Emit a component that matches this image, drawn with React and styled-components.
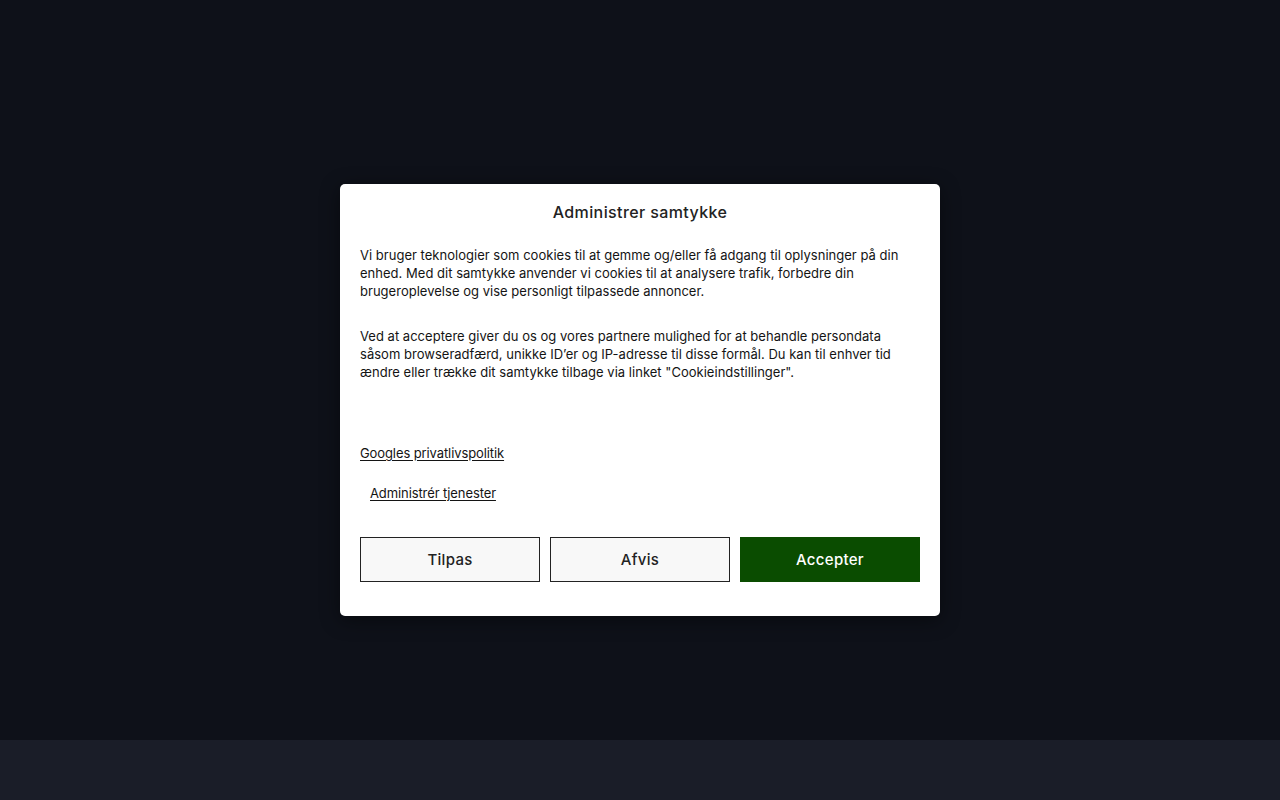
import React from "react";
import styled, { createGlobalStyle } from "styled-components";

const Global = createGlobalStyle`
  html, body { margin: 0; padding: 0; }
  body { background: #0e1119; font-family: "Inter", "Noto Sans", sans-serif; }
  * { box-sizing: border-box; }
`;

const Page = styled.div`
  width: 1280px;
  height: 800px;
  display: flex;
  flex-direction: column;
`;

const Overlay = styled.div`
  height: 740px;
  background: #0e1119;
  display: flex;
  justify-content: center;
  padding-top: 184px;
`;

const Footer = styled.div`
  height: 60px;
  background: #1a1d28;
`;

const Modal = styled.div`
  width: 600px;
  height: 432px;
  background: #ffffff;
  border-radius: 5px;
  box-shadow: 0 4px 20px rgba(0, 0, 0, 0.45);
  padding: 17px 20px 20px;
  display: flex;
  flex-direction: column;
  color: #222222;
`;

const Title = styled.h2`
  margin: 0;
  text-align: center;
  font-size: 16px;
  font-weight: 500;
  line-height: 22px;
  letter-spacing: 0.4px;
  color: #222;
`;

const Text = styled.p`
  margin: ${(p) => p.$top}px 0 0;
  font-size: 13px;
  line-height: 18px;
  letter-spacing: 0.02px;
  color: #141414;
`;

const Link = styled.a`
  display: block;
  margin-top: ${(p) => p.$top}px;
  margin-left: ${(p) => p.$indent || 0}px;
  font-size: 13px;
  line-height: 18px;
  letter-spacing: -0.1px;
  color: #141414;
  text-decoration: underline;
  text-underline-offset: 2px;
`;

const Buttons = styled.div`
  margin-top: 35px;
  display: grid;
  grid-template-columns: repeat(3, 180px);
  gap: 10px;
`;

const Button = styled.button`
  height: 45px;
  font-family: inherit;
  font-size: 15px;
  font-weight: 500;
  letter-spacing: 0.3px;
  color: ${(p) => (p.$primary ? "#ffffff" : "#222222")};
  background: ${(p) => (p.$primary ? "#0a4c00" : "#f8f8f8")};
  border: 1px solid ${(p) => (p.$primary ? "#0a4c00" : "#222222")};
  border-radius: 0;
  cursor: pointer;
`;

export default function App() {
  return (
    <Page>
      <Global />
      <Overlay>
        <Modal>
          <Title>Administrer samtykke</Title>
          <Text $top={23}>
            Vi bruger teknologier som cookies til at gemme og/eller få adgang til oplysninger på din enhed. Med dit samtykke anvender vi cookies til at analysere trafik, forbedre din brugeroplevelse og vise personligt tilpassede annoncer.
          </Text>
          <Text $top={27}>
            Ved at acceptere giver du os og vores partnere mulighed for at behandle persondata såsom browseradfærd, unikke ID’er og IP-adresse til disse formål. Du kan til enhver tid ændre eller trække dit samtykke tilbage via linket "Cookieindstillinger".
          </Text>
          <Link href="#" $top={63}>Googles privatlivspolitik</Link>
          <Link href="#" $top={22} $indent={10}>Administrér tjenester</Link>
          <Buttons>
            <Button>Tilpas</Button>
            <Button>Afvis</Button>
            <Button $primary>Accepter</Button>
          </Buttons>
        </Modal>
      </Overlay>
      <Footer />
    </Page>
  );
}
